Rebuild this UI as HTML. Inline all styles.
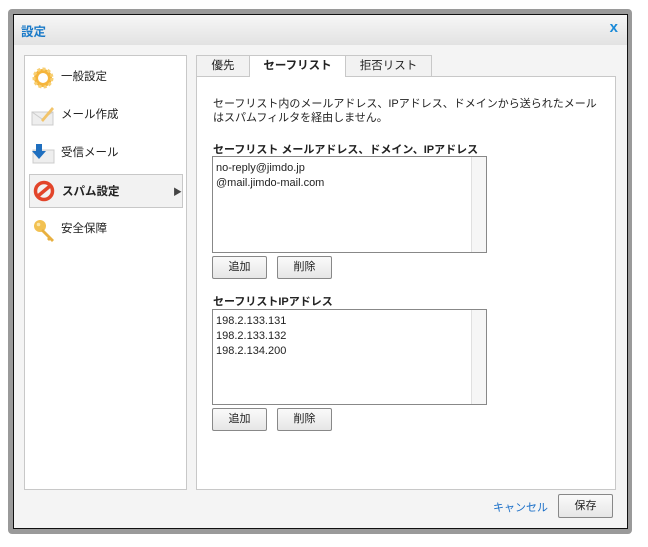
<!DOCTYPE html>
<html><head><meta charset="utf-8"><style>
*{box-sizing:border-box;margin:0;padding:0}
body{width:648px;height:547px;background:#fff;font-family:"Liberation Sans","Noto Sans CJK JP",sans-serif;font-size:11px;color:#222;position:relative;overflow:hidden}
.abs{position:absolute}
.frame{left:8px;top:9px;width:624px;height:525px;background:#9a9a9a;border-radius:4px}
.dlg{left:13px;top:14px;width:615px;height:515px;background:#f4f4f4;border:1px solid #111}
.title{left:14px;top:15px;width:613px;height:30px;background:linear-gradient(#f6f6f6,#e2e2e2);}
.title span{position:absolute;left:7px;top:6px;color:#1a7ac8;font-weight:bold;font-size:12.5px}
.x{position:absolute;right:9px;top:4px;color:#1a8ad8;font-weight:bold;font-size:15px}
.left{left:24px;top:55px;width:163px;height:435px;background:#fff;border:1px solid #c8c8c8}
.item{position:absolute;left:4px;width:154px;height:33px}
.item .t{position:absolute;left:32px;top:6px;font-size:11.5px}
.sel{background:#f2f2f2;border:1px solid #c8c8c8}
.tab{top:55px;height:22px;border:1px solid #c8c8c8;background:#f2f2f2;text-align:center;line-height:20px;font-size:11.5px}
.content{left:196px;top:76px;width:420px;height:414px;background:#fff;border:1px solid #c8c8c8}
.ta{border:1px solid #888;background:#fff;font-size:11px;line-height:15px;padding:4px 3px}
.ta .sb{position:absolute;right:0;top:0;bottom:0;width:15px;background:#f6f6f6;border-left:1px solid #e0e0e0}
.btn{border:1px solid #888;border-radius:2px;background:linear-gradient(#fafafa,#e6e6e6);text-align:center;font-size:11px;line-height:20px;height:23px}
</style></head><body>
<div class="abs frame"></div>
<div class="abs dlg"></div>
<div class="abs title"><span>設定</span><div class="x">x</div></div>
<div class="abs left">
 <div class="item" style="top:6px"><svg class="abs" style="left:3px;top:5px" width="22" height="22" viewBox="0 0 22 22"><circle cx="11" cy="11" r="9" fill="#f5b53b" stroke="#f7cf73" stroke-width="3" stroke-dasharray="3 2.2"/><circle cx="11" cy="11" r="5" fill="#fff"/></svg><span class="t">一般設定</span></div>
 <div class="item" style="top:44px"><svg class="abs" style="left:2px;top:5px" width="24" height="22" viewBox="0 0 24 22"><rect x="1" y="7" width="21" height="13" fill="#eee" stroke="#ccc"/><path d="M1 7l10 7 11-7" fill="none" stroke="#ccc"/><path d="M10 15L21 2l2 2-11 13z" fill="#f2c46a"/></svg><span class="t">メール作成</span></div>
 <div class="item" style="top:82px"><svg class="abs" style="left:2px;top:5px" width="24" height="22" viewBox="0 0 24 22"><rect x="2" y="7" width="21" height="13" fill="#eee" stroke="#ccc"/><path d="M5 1h6v7h4l-7 8-7-8h4z" fill="#1f6fbf"/></svg><span class="t">受信メール</span></div>
 <div class="item sel" style="top:118px;height:34px"><svg class="abs" style="left:3px;top:5px" width="22" height="22" viewBox="0 0 22 22"><circle cx="11" cy="11" r="8.5" fill="none" stroke="#e2452a" stroke-width="3.5"/><path d="M5 16L17 6" stroke="#e2452a" stroke-width="3.5"/></svg><span class="t" style="font-weight:bold;top:8px">スパム設定</span><span class="abs" style="left:143px;top:10px;font-size:9px;color:#444">▶</span></div>
 <div class="item" style="top:158px"><svg class="abs" style="left:3px;top:4px" width="24" height="26" viewBox="0 0 24 26"><circle cx="8" cy="8" r="6" fill="#f2c151"/><path d="M11 11l11 11-2 2-2-2-1 1-2-2 1-1-7-7z" fill="#e8b040"/><circle cx="6.5" cy="6.5" r="1.8" fill="#fbe6a9"/></svg><span class="t">安全保障</span></div>
</div>
<div class="abs tab" style="left:196px;width:54px">優先</div>
<div class="abs tab" style="left:249px;width:97px;background:#fff;border-bottom:none;height:22px;font-weight:bold;z-index:2">セーフリスト</div>
<div class="abs tab" style="left:345px;width:87px">拒否リスト</div>
<div class="abs content"></div>
<div class="abs" style="left:213px;top:97px;width:385px;line-height:14px;font-size:11px">セーフリスト内のメールアドレス、IPアドレス、ドメインから送られたメールはスパムフィルタを経由しません。</div>
<div class="abs" style="left:213px;top:141px;font-weight:bold;font-size:11px">セーフリスト メールアドレス、ドメイン、IPアドレス</div>
<div class="abs ta" style="left:212px;top:156px;width:275px;height:97px"><div class="sb"></div>no-reply@jimdo.jp<br>@mail.jimdo-mail.com</div>
<div class="abs btn" style="left:212px;top:256px;width:55px">追加</div>
<div class="abs btn" style="left:277px;top:256px;width:55px">削除</div>
<div class="abs" style="left:213px;top:293px;font-weight:bold;font-size:11px">セーフリストIPアドレス</div>
<div class="abs ta" style="left:212px;top:309px;width:275px;height:96px"><div class="sb"></div>198.2.133.131<br>198.2.133.132<br>198.2.134.200</div>
<div class="abs btn" style="left:212px;top:408px;width:55px">追加</div>
<div class="abs btn" style="left:277px;top:408px;width:55px">削除</div>
<div class="abs" style="left:493px;top:499px;color:#1a6fc8;font-size:11px">キャンセル</div>
<div class="abs btn" style="left:558px;top:494px;width:55px;height:24px;line-height:22px">保存</div>
</body></html>
